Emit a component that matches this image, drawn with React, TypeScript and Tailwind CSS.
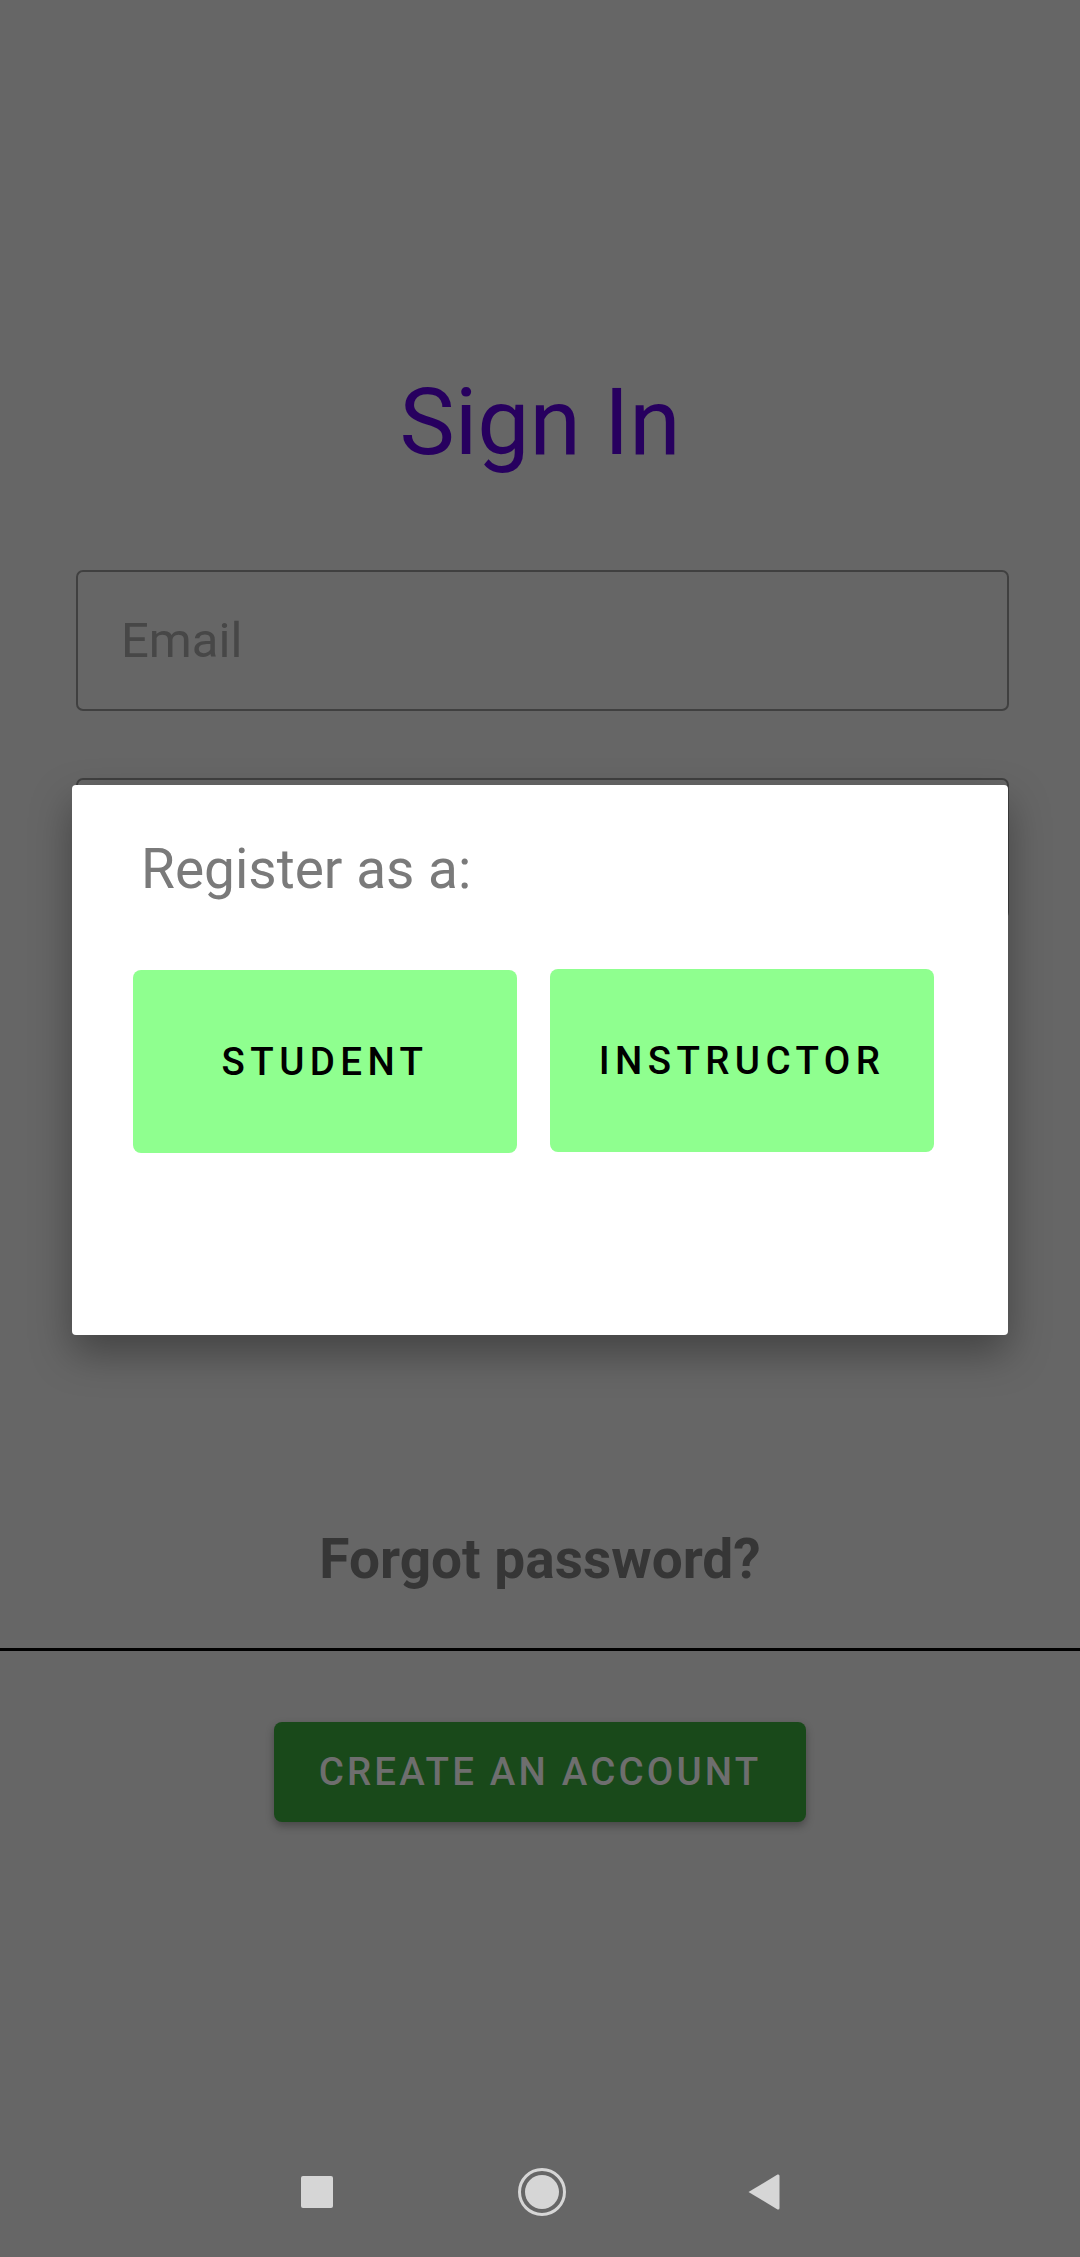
import React from "react";

const NavBar = () => (
  <div className="mt-auto h-[130px] flex items-center justify-center">
    <div className="w-[32px] h-[32px] rounded-[2px] bg-[#d6d6d6]" />
    <svg className="ml-[184px]" width="50" height="50" viewBox="0 0 50 50">
      <circle cx="25" cy="25" r="22.5" fill="none" stroke="#d6d6d6" strokeWidth="3" />
      <circle cx="25" cy="25" r="17" fill="#d6d6d6" />
    </svg>
    <svg className="ml-[180px]" width="33" height="38" viewBox="0 0 33 38">
      <path d="M1.5 19 L30.5 1.6 Q32.5 0.8 32.5 3 V35 Q32.5 37.2 30.5 36.4 Z" fill="#d6d6d6" />
    </svg>
  </div>
);

const RoleDialog = () => (
  <div className="absolute top-[785px] left-[72px] w-[936px] h-[550px] bg-white rounded-[4px] shadow-[0_18px_40px_rgba(0,0,0,0.35)]">
    <p className="mt-[57px] pl-[69px] text-[55px] leading-none text-[#7a7a7a]">Register as a:</p>
    <div className="mt-[73px] pl-[61px] flex gap-[33px]">
      <button className="w-[384px] h-[183px] rounded-[8px] bg-[#8fff8f] text-black text-[38.5px] font-medium tracking-[0.14em] uppercase">
        Student
      </button>
      <button className="w-[384px] h-[183px] -mt-[1px] rounded-[8px] bg-[#8fff8f] text-black text-[38.5px] font-medium tracking-[0.14em] uppercase">
        Instructor
      </button>
    </div>
  </div>
);

export default function App() {
  return (
    <div className="relative w-[1080px] h-[2257px] bg-[#666666] font-['Roboto',sans-serif] flex flex-col overflow-hidden">
      <h1 className="mt-[376px] text-center text-[93px] leading-none text-[#27005f]">Sign In</h1>

      <div className="mt-[101px] ml-[76px] w-[933px] h-[141px] border-2 border-[#404040] rounded-[7px] flex items-center pl-[43px]">
        <span className="text-[49px] leading-none text-[#474747]">Email</span>
      </div>
      <div className="mt-[67px] ml-[76px] w-[933px] h-[141px] border-2 border-[#404040] rounded-[7px]" />

      <p className="mt-[613px] text-center text-[55px] leading-none font-bold text-[#363636]">Forgot password?</p>

      <div className="mt-[61px] h-[3px] bg-black" />

      <button className="mt-[71px] self-center w-[532px] h-[100px] rounded-[8px] bg-[#19491a] shadow-[0_4px_8px_rgba(0,0,0,0.3)] text-[#6e6e6e] text-[38.5px] font-medium tracking-[0.082em] uppercase">
        Create an account
      </button>

      <NavBar />

      <RoleDialog />
    </div>
  );
}
